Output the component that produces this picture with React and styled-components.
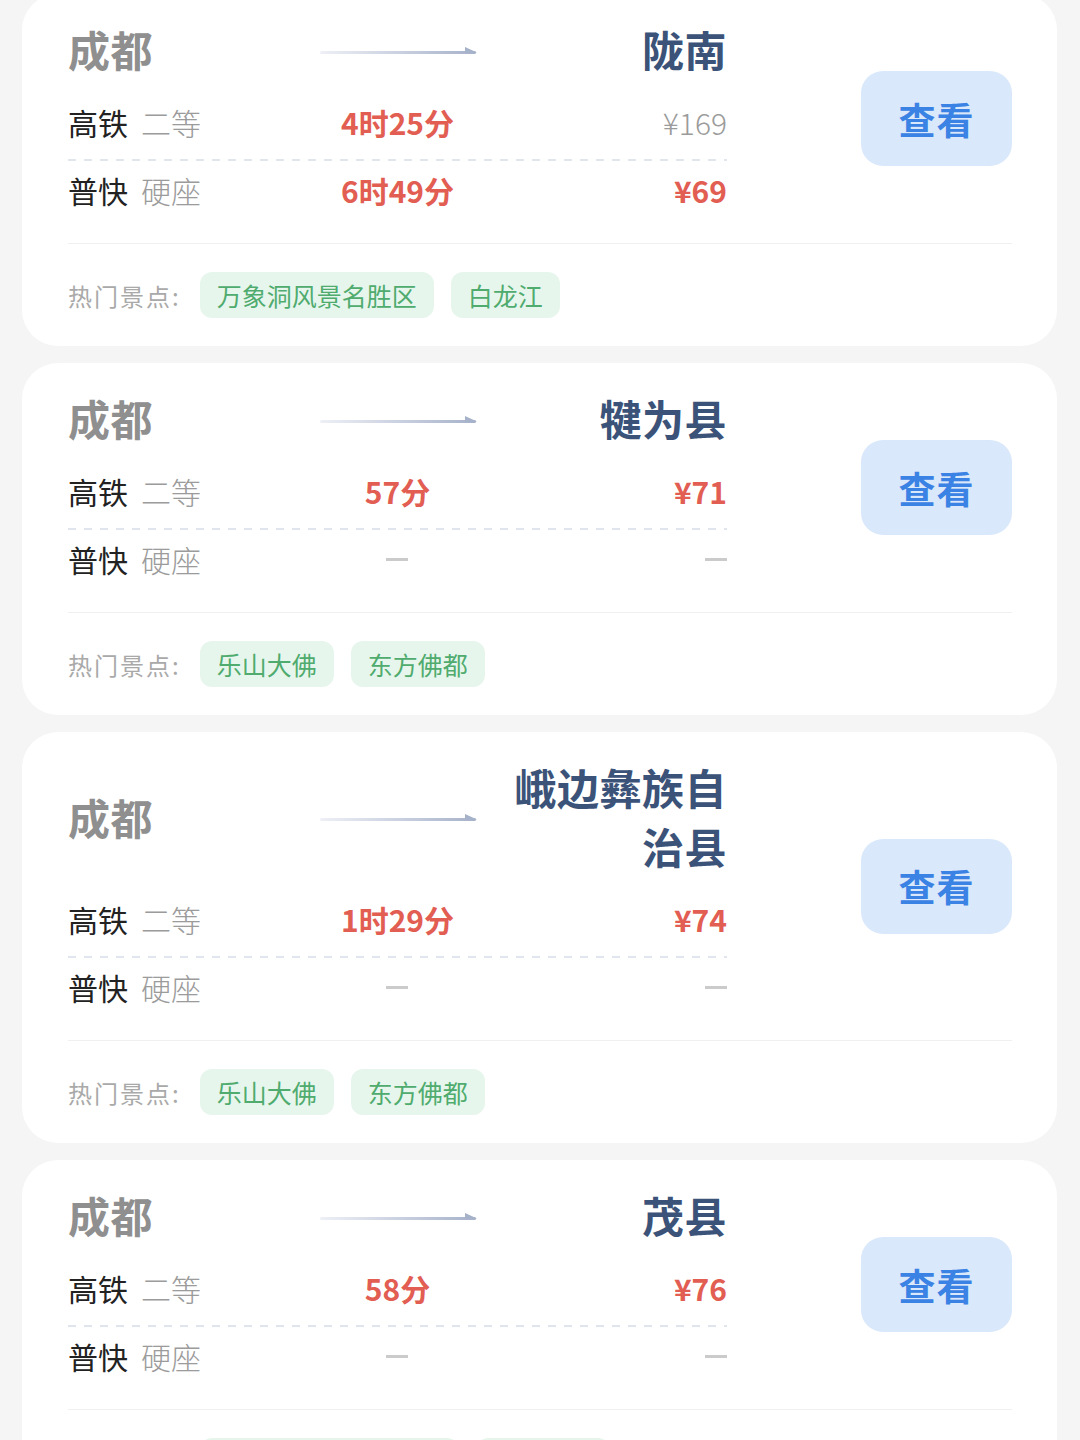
import React from 'react';
import styled, { createGlobalStyle } from 'styled-components';

const GlobalStyle = createGlobalStyle`
  html, body { margin: 0; padding: 0; background: #f5f5f5; }
  body {
    font-family: "Noto Sans CJK SC", "Noto Sans", sans-serif;
    -webkit-font-smoothing: antialiased;
  }
`;

const Page = styled.div`
  display: flex;
  flex-direction: column;
  gap: 17px;
  padding: 0 23px 40px 22px;
  margin-top: -6px;
`;

const Card = styled.section`
  background: #ffffff;
  border-radius: 36px;
  padding: 0 45px 0 46px;
`;

const Upper = styled.div`
  display: flex;
  align-items: center;
  justify-content: space-between;
  border-bottom: 1px solid #f0f0f0;
`;

const Main = styled.div`
  width: 659px;
  display: flex;
  flex-direction: column;
  padding: 25px 0 33px;
`;

const Grid = styled.div`
  display: grid;
  grid-template-columns: repeat(3, 1fr);
  align-items: center;
`;

const TitleRow = styled(Grid)`
  margin-bottom: 10px;
`;

const City = styled.div`
  font-size: 42px;
  line-height: 59px;
  font-weight: 700;
  color: ${p => (p.$dest ? '#3c5379' : '#8f8f8f')};
  text-align: ${p => (p.$dest ? 'right' : 'left')};
  justify-self: ${p => (p.$dest ? 'end' : 'start')};
  letter-spacing: 0.5px;
`;

const ArrowWrap = styled.div`
  justify-self: center;
  display: flex;
  align-items: center;
  margin-left: 4px;
`;

const Row = styled(Grid)`
  font-size: 30px;
  line-height: 40px;
  padding: ${p => (p.$first ? '14px 0 17px' : '9px 0 0')};
`;

const DashedRule = styled.div`
  height: 2px;
  background: repeating-linear-gradient(to right, #e1e5ee 0 8px, transparent 8px 16px);
`;

const Name = styled.div`
  color: #222222;
  white-space: nowrap;
`;

const Grade = styled.span`
  color: #9b9b9b;
  font-weight: 300;
  margin-left: 13px;
`;

const Duration = styled.div`
  justify-self: center;
  color: #e25d52;
  font-weight: 700;
`;

const Price = styled.div`
  justify-self: end;
  color: ${p => (p.$hot ? '#e25d52' : '#9b9b9b')};
  font-weight: ${p => (p.$hot ? 700 : 300)};
`;

const Dash = styled.span`
  display: inline-block;
  width: 22px;
  height: 3px;
  background: #cbcbcb;
  vertical-align: middle;
`;

const Cell = styled.div`
  justify-self: ${p => p.$align || 'start'};
  display: flex;
  align-items: center;
  height: 40px;
`;

const ViewButton = styled.button`
  width: 151px;
  height: 95px;
  border: none;
  border-radius: 22px;
  background: #dae8fb;
  color: #3a82e3;
  font-family: inherit;
  font-size: 37px;
  font-weight: 700;
  display: flex;
  align-items: center;
  justify-content: center;
  padding: 0;
  letter-spacing: 1px;
`;

const Spots = styled.div`
  display: flex;
  align-items: center;
  gap: 17px;
  padding: 28px 0 28px;
`;

const SpotsLabel = styled.span`
  font-size: 24px;
  letter-spacing: 2px;
  color: #a9a9a9;
  margin-right: 2px;
`;

const Tag = styled.span`
  height: 46px;
  line-height: 46px;
  padding: 0 17px;
  border-radius: 12px;
  background: #e7f6ed;
  color: #4fab6e;
  font-size: 25px;
`;

const Arrow = () => (
  <svg width="158" height="14" viewBox="0 0 158 14">
    <defs>
      <linearGradient id="arrowGrad" x1="0" y1="0" x2="1" y2="0">
        <stop offset="0" stopColor="#eef0f6" />
        <stop offset="1" stopColor="#a6b2ca" />
      </linearGradient>
    </defs>
    <rect x="0" y="9" width="156" height="3" rx="1.5" fill="url(#arrowGrad)" />
    <path d="M145 5 L157 10.5 L145 10.5 Z" fill="#a6b2ca" />
  </svg>
);

const trips = [
  {
    dest: '陇南',
    rows: [
      { name: '高铁', grade: '二等', time: '4时25分', price: '¥169', hot: false },
      { name: '普快', grade: '硬座', time: '6时49分', price: '¥69', hot: true },
    ],
    spots: ['万象洞风景名胜区', '白龙江'],
  },
  {
    dest: '犍为县',
    rows: [
      { name: '高铁', grade: '二等', time: '57分', price: '¥71', hot: true },
      { name: '普快', grade: '硬座', time: null, price: null },
    ],
    spots: ['乐山大佛', '东方佛都'],
  },
  {
    dest: '峨边彝族自治县',
    rows: [
      { name: '高铁', grade: '二等', time: '1时29分', price: '¥74', hot: true },
      { name: '普快', grade: '硬座', time: null, price: null },
    ],
    spots: ['乐山大佛', '东方佛都'],
  },
  {
    dest: '茂县',
    rows: [
      { name: '高铁', grade: '二等', time: '58分', price: '¥76', hot: true },
      { name: '普快', grade: '硬座', time: null, price: null },
    ],
    spots: ['中国古羌城旅游景区', '黑虎羌寨'],
  },
];

const TrainRow = ({ row, first }) => (
  <Row $first={first}>
    <Name>
      {row.name}
      <Grade>{row.grade}</Grade>
    </Name>
    {row.time ? (
      <Duration>{row.time}</Duration>
    ) : (
      <Cell $align="center"><Dash /></Cell>
    )}
    {row.price ? (
      <Price $hot={row.hot}>{row.price}</Price>
    ) : (
      <Cell $align="end"><Dash /></Cell>
    )}
  </Row>
);

const TripCard = ({ trip }) => (
  <Card>
    <Upper>
      <Main>
        <TitleRow>
          <City>成都</City>
          <ArrowWrap><Arrow /></ArrowWrap>
          <City $dest>{trip.dest}</City>
        </TitleRow>
        <TrainRow row={trip.rows[0]} first />
        <DashedRule />
        <TrainRow row={trip.rows[1]} />
      </Main>
      <ViewButton>查看</ViewButton>
    </Upper>
    <Spots>
      <SpotsLabel>热门景点:</SpotsLabel>
      {trip.spots.map(s => (
        <Tag key={s}>{s}</Tag>
      ))}
    </Spots>
  </Card>
);

export default function App() {
  return (
    <>
      <GlobalStyle />
      <Page>
        {trips.map(t => (
          <TripCard key={t.dest} trip={t} />
        ))}
      </Page>
    </>
  );
}
